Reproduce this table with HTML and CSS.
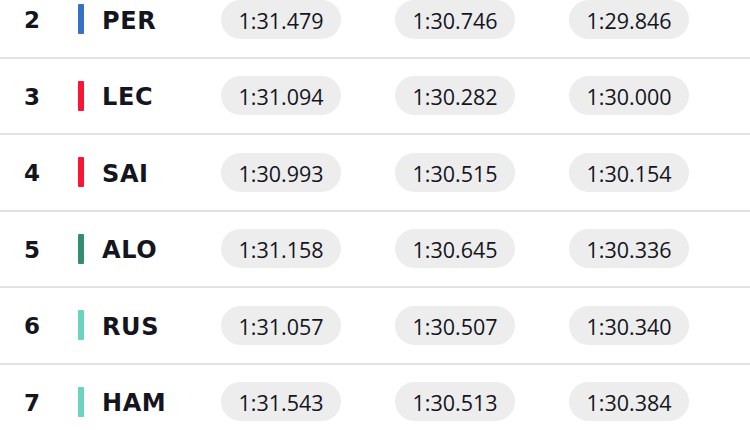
FILE: index.html
```html
<!DOCTYPE html>
<html>
<head>
<meta charset="utf-8">
<link rel="stylesheet" href="styles.css">
</head>
<body>
<div class="table">
  <div class="row">
    <div class="pos">2</div>
    <div class="driver"><span class="bar redbull"></span><span class="code">PER</span></div>
    <div class="times"><span class="pill">1:31.479</span><span class="pill">1:30.746</span><span class="pill">1:29.846</span></div>
  </div>
  <div class="row">
    <div class="pos">3</div>
    <div class="driver"><span class="bar ferrari"></span><span class="code">LEC</span></div>
    <div class="times"><span class="pill">1:31.094</span><span class="pill">1:30.282</span><span class="pill">1:30.000</span></div>
  </div>
  <div class="row">
    <div class="pos">4</div>
    <div class="driver"><span class="bar ferrari"></span><span class="code">SAI</span></div>
    <div class="times"><span class="pill">1:30.993</span><span class="pill">1:30.515</span><span class="pill">1:30.154</span></div>
  </div>
  <div class="row">
    <div class="pos">5</div>
    <div class="driver"><span class="bar aston"></span><span class="code">ALO</span></div>
    <div class="times"><span class="pill">1:31.158</span><span class="pill">1:30.645</span><span class="pill">1:30.336</span></div>
  </div>
  <div class="row">
    <div class="pos">6</div>
    <div class="driver"><span class="bar mercedes"></span><span class="code">RUS</span></div>
    <div class="times"><span class="pill">1:31.057</span><span class="pill">1:30.507</span><span class="pill">1:30.340</span></div>
  </div>
  <div class="row">
    <div class="pos">7</div>
    <div class="driver"><span class="bar mercedes"></span><span class="code">HAM</span></div>
    <div class="times"><span class="pill">1:31.543</span><span class="pill">1:30.513</span><span class="pill">1:30.384</span></div>
  </div>
</div>
</body>
</html>
```
FILE: styles.css
```css
html, body {
  margin: 0;
  padding: 0;
  background: #ffffff;
  overflow: hidden;
}
.table {
  margin-top: -18px;
}
.row {
  display: flex;
  align-items: center;
  height: 74.5px;
  border-bottom: 2px solid #e2e2e2;
  color: #15151e;
}
.pos {
  width: 53px;
  padding-left: 24px;
  padding-top: 2px;
  box-sizing: content-box;
  font-family: "DejaVu Sans", sans-serif;
  font-weight: 700;
  font-size: 23px;
}
.driver {
  display: flex;
  align-items: center;
  width: 144px;
}
.bar {
  width: 6px;
  height: 30px;
  margin-left: 1px;
  border-radius: 1px;
}
.redbull { background: #3671c6; }
.ferrari { background: #f91536; }
.aston { background: #358c75; }
.mercedes { background: #6cd3bf; }
.code {
  margin-left: 18px;
  padding-top: 3px;
  font-family: "DejaVu Sans", sans-serif;
  font-weight: 700;
  font-size: 24px;
  letter-spacing: 0.6px;
}
.times {
  display: flex;
  gap: 54px;
}
.pill {
  width: 120px;
  height: 39px;
  padding-top: 2px;
  box-sizing: border-box;
  border-radius: 20px;
  background: #ededed;
  display: flex;
  align-items: center;
  justify-content: center;
  font-family: "Open Sans", sans-serif;
  font-size: 21.5px;
  font-weight: 500;
}
```
